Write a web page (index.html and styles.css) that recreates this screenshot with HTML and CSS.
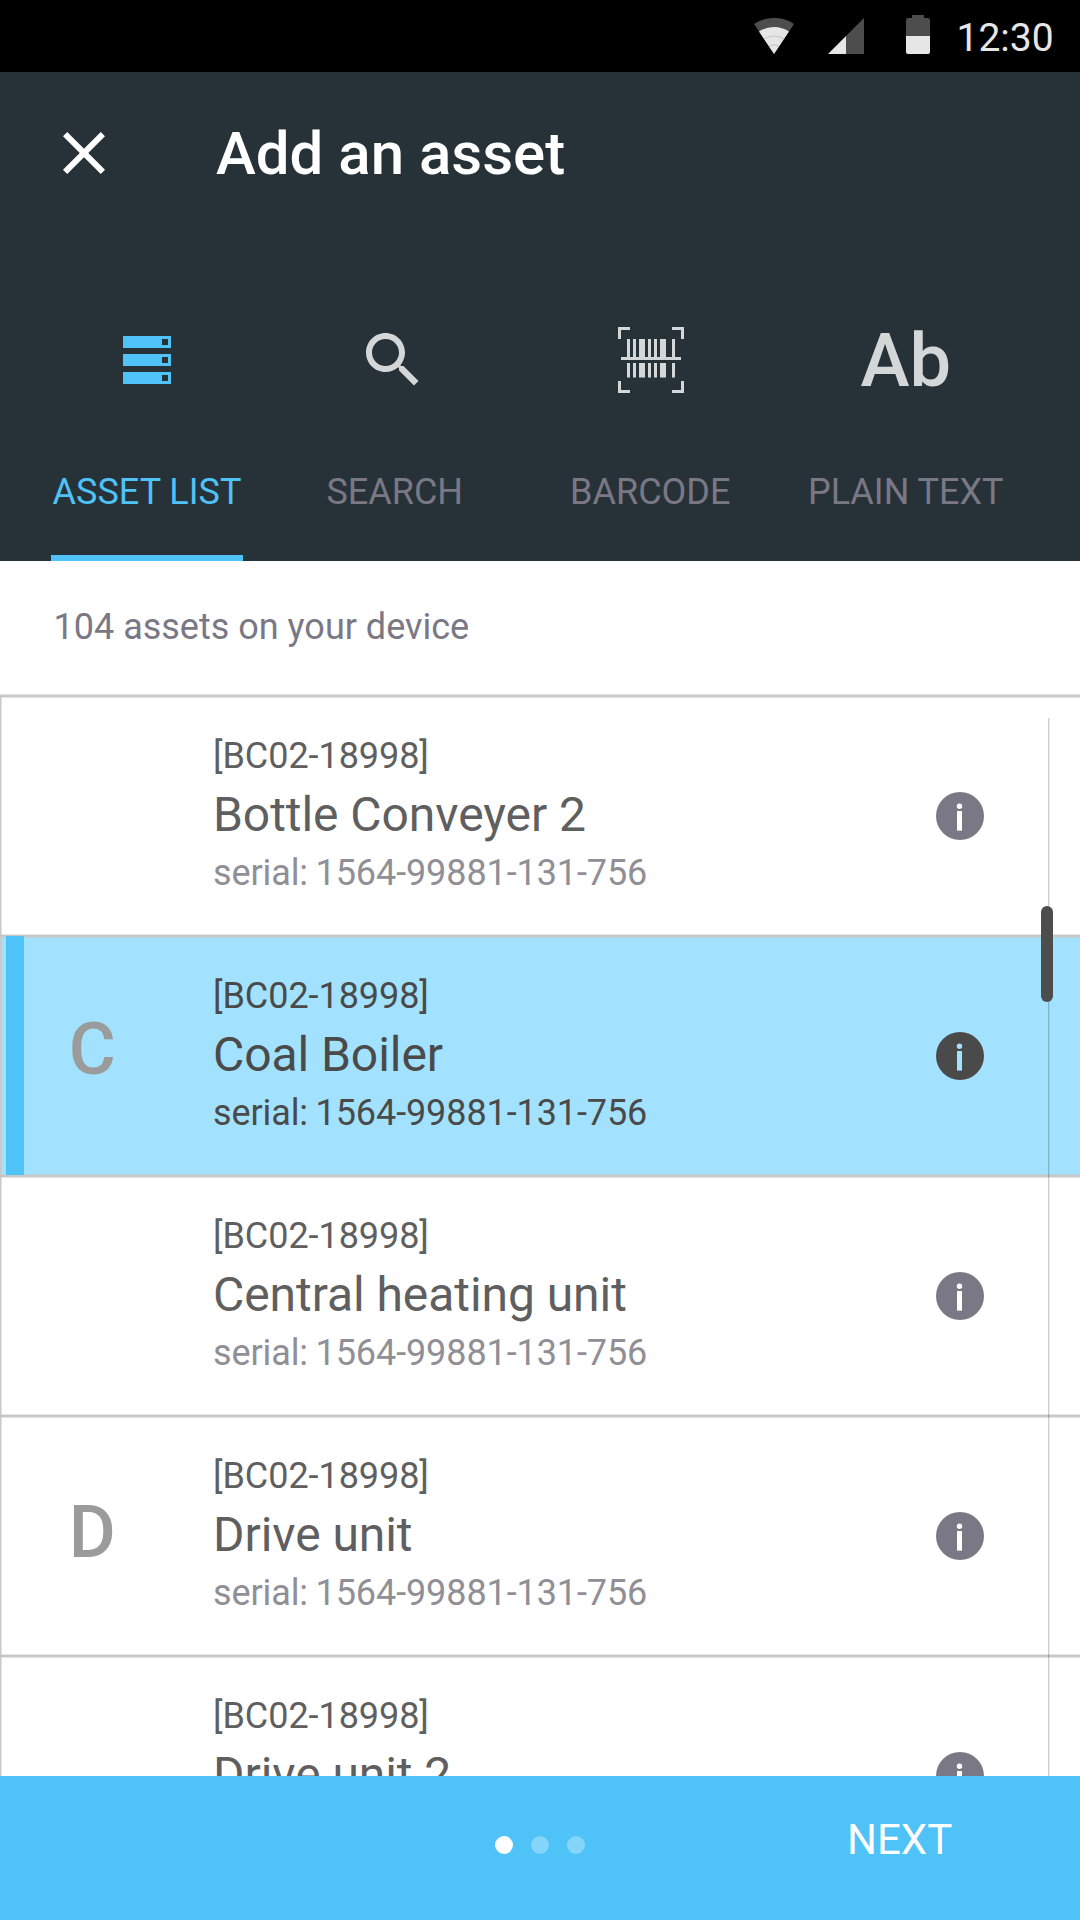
FILE: index.html
```html
<!DOCTYPE html>
<html lang="en">
<head>
<meta charset="utf-8">
<title>Add an asset</title>
<link rel="stylesheet" href="styles.css">
</head>
<body>
<svg class="defs" width="0" height="0" aria-hidden="true">
  <symbol id="info" viewBox="0 0 48 48">
    <circle cx="24" cy="24" r="24" fill="currentColor"/>
    <circle class="info-mark" cx="23.5" cy="14.3" r="2.7"/>
    <rect class="info-mark" x="21" y="19" width="5" height="19.6"/>
  </symbol>
</svg>
<div class="screen">
  <div class="status">
    <svg class="wifi" width="40" height="36" viewBox="0 0 40 36">
      <path fill="#4d4d4d" d="M20 36 0 6A36 36 0 0 1 40 6Z"/>
      <path fill="#e6e6e6" d="M20 36 5 13.5A27 27 0 0 1 35 13.5Z"/>
      <path fill="none" stroke="#b4b4b4" stroke-width=".7" d="M10 21A18 18 0 0 1 30 21M15 28.500A9 9 0 0 1 25 28.500"/>
    </svg>
    <svg class="signal" width="36" height="36" viewBox="0 0 36 36">
      <path fill="#4d4d4d" d="M18 18 36 0V36H18Z"/>
      <path fill="#e6e6e6" d="M0 36 18 18V36Z"/>
    </svg>
    <svg class="battery" width="24" height="39" viewBox="0 0 24 39">
      <path fill="#4d4d4d" d="M6 0H18V3H22Q24 3 24 5V21H0V5Q0 3 2 3H6Z"/>
      <path fill="#e6e6e6" d="M0 21H24V37Q24 39 22 39H2Q0 39 0 37Z"/>
    </svg>
    <span class="time">12:30</span>
  </div>

  <header class="header">
    <div class="appbar">
      <svg class="close" width="72" height="72" viewBox="0 0 24 24"><path fill="#fff" d="M19 6.410 17.590 5 12 10.590 6.410 5 5 6.410 10.590 12 5 17.590 6.410 19 12 13.410 17.590 19 19 17.590 13.410 12z"/></svg>
      <h1 class="title">Add an asset</h1>
    </div>
    <nav class="tabs">
      <div class="tab tab-active">
        <svg class="tab-icon" width="72" height="72" viewBox="0 0 72 72"><path fill="#4fc2f8" fill-rule="evenodd" d="M12 12h48v12H12zM51 15v6h6v-6zM12 30h48v12H12zM51 33v6h6v-6zM12 48h48v12H12zM51 51v6h6v-6z"/></svg>
        <span class="label">ASSET LIST</span>
      </div>
      <div class="tab">
        <svg class="tab-icon icon-search" width="72" height="72" viewBox="0 0 24 24"><path fill="#d3d7d8" d="M15.500 14h-.79l-.28-.27C15.410 12.590 16 11.110 16 9.500 16 5.910 13.090 3 9.500 3S3 5.910 3 9.500 5.910 16 9.500 16c1.610 0 3.090-.59 4.230-1.570l.27.28v.79l5 4.990L20.490 19l-4.990-5zm-6 0C7.010 14 5 11.990 5 9.500S7.010 5 9.500 5 14 7.010 14 9.500 11.990 14 9.500 14z"/></svg>
        <span class="label">SEARCH</span>
      </div>
      <div class="tab">
        <svg class="tab-icon icon-barcode" width="72" height="72" viewBox="0 0 72 72">
          <path fill="#d3d7d8" d="M3 3h12v3H6v9H3zM57 3h12v12h-3V6h-9zM3 57h3v9h9v3H3zM66 57h3v12H57v-3h9zM6 33h60v3H6z"/>
          <path fill="#d3d7d8" d="M12 15h3v18h-3zM18 15h3v18h-3zM24 15h6v18h-6zM33 15h3v18h-3zM39 15h3v18h-3zM45 15h6v18h-6zM57 15h3v18h-3z"/>
          <path fill="#d3d7d8" d="M12 39h3v14.500h-3zM18 39h3v14.500h-3zM24 39h6v14.500h-6zM33 39h3v14.500h-3zM39 39h3v14.500h-3zM45 39h6v14.500h-6zM57 39h3v14.500h-3z"/>
        </svg>
        <span class="label">BARCODE</span>
      </div>
      <div class="tab">
        <span class="tab-icon glyph">Ab</span>
        <span class="label">PLAIN TEXT</span>
      </div>
    </nav>
  </header>

  <div class="summary">104 assets on your device</div>

  <main class="list">
    <div class="row">
      <div class="letter"></div>
      <div class="asset"><div class="code">[BC02-18998]</div><div class="name">Bottle Conveyer 2</div><div class="serial">serial: 1564-99881-131-756</div></div>
      <svg class="info"><use href="#info"/></svg>
    </div>
    <div class="row selected">
      <div class="letter">C</div>
      <div class="asset"><div class="code">[BC02-18998]</div><div class="name">Coal Boiler</div><div class="serial">serial: 1564-99881-131-756</div></div>
      <svg class="info"><use href="#info"/></svg>
    </div>
    <div class="row">
      <div class="letter"></div>
      <div class="asset"><div class="code">[BC02-18998]</div><div class="name">Central heating unit</div><div class="serial">serial: 1564-99881-131-756</div></div>
      <svg class="info"><use href="#info"/></svg>
    </div>
    <div class="row">
      <div class="letter letter-low">D</div>
      <div class="asset"><div class="code">[BC02-18998]</div><div class="name">Drive unit</div><div class="serial">serial: 1564-99881-131-756</div></div>
      <svg class="info"><use href="#info"/></svg>
    </div>
    <div class="row">
      <div class="letter"></div>
      <div class="asset"><div class="code">[BC02-18998]</div><div class="name">Drive unit 2</div></div>
      <svg class="info"><use href="#info"/></svg>
    </div>
    <div class="track"></div>
    <div class="thumb"></div>
  </main>

  <footer class="footer">
    <div class="dots"><span class="dot dot-on"></span><span class="dot"></span><span class="dot"></span></div>
    <span class="next">NEXT</span>
  </footer>
</div>
</body>
</html>
```
FILE: styles.css
```css
* { box-sizing: border-box; }
body {
  margin: 0;
  font-family: Roboto, "Noto Sans", sans-serif;
  background: #fff;
}
.defs { position: absolute; }
.screen {
  width: 1080px;
  height: 1920px;
  display: flex;
  flex-direction: column;
  overflow: hidden;
}

/* status bar */
.status {
  height: 72px;
  background: #000;
  display: flex;
  justify-content: flex-end;
  align-items: flex-start;
  padding-right: 26px;
}
.wifi { margin: 18px 34px 0 0; }
.signal { margin: 18px 42px 0 0; }
.battery { margin: 15px 26.5px 0 0; }
.time {
  width: 97.5px;
  color: #e6e6e6;
  font-size: 39px;
  line-height: 77px;
  white-space: nowrap;
}

/* header */
.header { height: 489px; background: #273238; }
.appbar { height: 252px; display: flex; padding-left: 48px; }
.close { margin-top: 45px; }
.title {
  margin: 0 0 0 96px;
  color: #fff;
  font-size: 60px;
  font-weight: 500;
  line-height: 163px;
}
.tabs { height: 237px; display: flex; padding-left: 51px; }
.tab {
  width: 255.5px;
  display: flex;
  flex-direction: column;
  align-items: center;
  color: #7a7885;
}
.tab-active {
  width: 192px;
  margin-right: 24px;
  color: #4fc2f8;
  border-bottom: 6px solid #4fc2f8;
}
.tab-icon { height: 72px; flex: none; }
.icon-search { margin-right: 3.5px; }
.icon-barcode { margin-left: 1.5px; }
.glyph {
  color: #d3d7d8;
  font-size: 74px;
  font-weight: 500;
  line-height: 74px;
}
.label {
  margin-top: 72px;
  font-size: 36px;
  line-height: 48px;
  white-space: nowrap;
}

/* list */
.summary {
  height: 135px;
  padding-left: 53.5px;
  color: #7a7885;
  font-size: 36px;
  line-height: 132px;
  background: linear-gradient(to top, #c8c8c8 1px, #e3e3e3 1px 2px, #fff 2px);
}
.list {
  position: relative;
  height: 1080px;
  overflow: hidden;
}
.row {
  position: relative;
  height: 240px;
  display: flex;
  color: #5f5f5f;
  background:
    linear-gradient(to bottom, #c8c8c8 1px, rgba(200, 200, 200, .5) 1px 2px, transparent 2px),
    linear-gradient(to top, #c8c8c8 1px, rgba(200, 200, 200, .5) 1px 2px, transparent 2px),
    linear-gradient(to right, #c8c8c8 1px, rgba(200, 200, 200, .5) 1px 2px, transparent 2px);
}
.selected { color: #4a4a4a; background-color: #a3e2ff; }
.selected::before {
  content: "";
  position: absolute;
  left: 6px;
  top: 0;
  width: 18px;
  height: 239px;
  background: #4fc2f8;
}
.letter {
  width: 213px;
  padding-left: 68.7px;
  color: #9b9b9b;
  font-size: 72px;
  font-weight: 500;
  line-height: 228px;
}
.letter-low { line-height: 233px; }
.asset { width: 723px; padding-top: 36px; white-space: nowrap; }
.code { font-size: 36px; line-height: 48px; letter-spacing: -.06px; }
.name { font-size: 48px; line-height: 69px; letter-spacing: -.06px; }
.serial { font-size: 36px; line-height: 48px; letter-spacing: -.1px; word-spacing: -1.2px; color: #908f96; }
.selected .serial { color: #4a4a4a; }
.info { width: 48px; height: 48px; margin-top: 96px; color: #7a7885; fill: #fff; }
.selected .info { color: #4a4a4a; fill: #a3e2ff; }
.track {
  position: absolute;
  left: 1048px;
  top: 22px;
  bottom: 0;
  width: 2px;
  border-left: 1px solid rgba(0, 0, 0, .19);
  border-right: 1px solid rgba(0, 0, 0, .07);
}
.thumb {
  position: absolute;
  left: 1041px;
  top: 210px;
  width: 12px;
  height: 96px;
  border-radius: 6px;
  background: #4d4d4d;
}

/* footer */
.footer {
  height: 144px;
  background: #4fc2f8;
  display: flex;
  padding-left: 495px;
}
.dots { display: flex; gap: 18px; padding-top: 60px; }
.dot { width: 18px; height: 18px; border-radius: 50%; background: #85d5fb; }
.dot-on { background: #fff; }
.next {
  margin-left: 262px;
  color: #fff;
  font-size: 42px;
  line-height: 127px;
}
```
